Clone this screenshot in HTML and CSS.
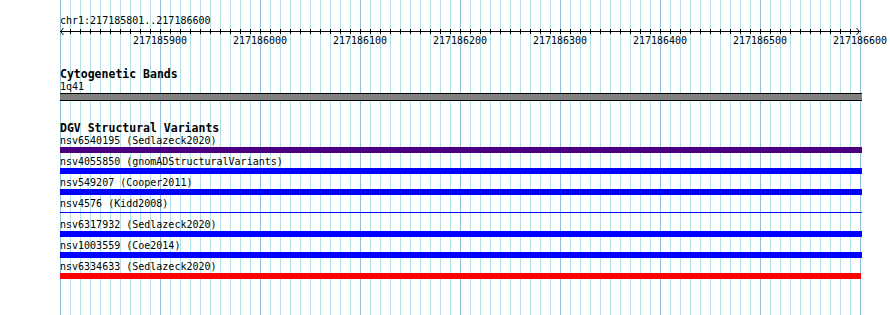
FILE: index.html
```html
<!DOCTYPE html>
<html lang="en">
<head>
  <meta charset="UTF-8" />
  <title>chr1:217185801..217186600</title>
  <link rel="stylesheet" href="styles.css">
</head>
<body>
  <div class="view">
    <div class="loc">chr1:217185801..217186600</div>

    <svg class="ruler" width="802" height="8" shape-rendering="crispEdges">
      <defs>
        <pattern id="tick" width="10" height="8" patternUnits="userSpaceOnUse">
          <rect x="0" y="2" width="1" height="5" fill="#000" />
        </pattern>
      </defs>
      <rect x="10" y="0" width="781" height="8" fill="url(#tick)" />
      <rect x="0" y="4" width="801" height="1" fill="#000" />
      <polyline points="3.5,1 0.5,4.5 3.5,8" fill="none" stroke="#000" stroke-width="1" shape-rendering="auto" />
      <polyline points="796.5,1 799.5,4.5 796.5,8" fill="none" stroke="#000" stroke-width="1" shape-rendering="auto" />
    </svg>

    <div class="scale">
      <span>217185900</span><span>217186000</span><span>217186100</span><span>217186200</span>
      <span>217186300</span><span>217186400</span><span>217186500</span><span>217186600</span>
    </div>

    <div class="track">
      <h3>Cytogenetic Bands</h3>
      <div class="label">1q41</div>
      <div class="band"></div>
    </div>

    <div class="track">
      <h3>DGV Structural Variants</h3>
      <div class="label">nsv6540195 (Sedlazeck2020)</div>
      <div class="bar purple"></div>
      <div class="label">nsv4055850 (gnomADStructuralVariants)</div>
      <div class="bar blue"></div>
      <div class="label">nsv549207 (Cooper2011)</div>
      <div class="bar blue"></div>
      <div class="label">nsv4576 (Kidd2008)</div>
      <div class="bar blue thin"></div>
      <div class="label">nsv6317932 (Sedlazeck2020)</div>
      <div class="bar blue"></div>
      <div class="label">nsv1003559 (Coe2014)</div>
      <div class="bar blue"></div>
      <div class="label">nsv6334633 (Sedlazeck2020)</div>
      <div class="bar red"></div>
    </div>
  </div>
</body>
</html>
```

FILE: styles.css
```css
html, body { margin: 0; background: #fff; overflow: hidden; }
body { font-family: "DejaVu Sans Mono", monospace; font-size: 10px; color: #000; }

.view {
  margin-left: 60px;
  width: 802px;
  height: 315px;
  padding-top: 15px;
  box-sizing: border-box;
  background:
    repeating-linear-gradient(to right, #8fc1de 0 1px, transparent 1px 100px) 0 0 / 801px 100% no-repeat,
    repeating-linear-gradient(to right, #b2e2e6 0 1px, transparent 1px 10px) 0 0 / 801px 100% no-repeat;
}

.loc { line-height: 12px; }
.ruler { display: block; }

.scale { display: flex; margin-left: 50px; line-height: 12px; }
.scale span { flex: 0 0 100px; text-align: center; }

.track { margin-top: 20px; }
.track h3 { margin: 0; font-size: 11.5px; line-height: 14px; font-weight: bold; }
.label { line-height: 12px; white-space: nowrap; }

.band { height: 6px; background: #808080; border-top: 1px solid #000; border-bottom: 1px solid #000; }

.bar { height: 6px; margin-bottom: 3px; }
.bar.thin { height: 1px; margin-top: 2px; margin-bottom: 6px; }
.purple { background: #4b0082; }
.blue { background: #0000ff; }
.red { background: #ff0000; width: 801px; }
```
